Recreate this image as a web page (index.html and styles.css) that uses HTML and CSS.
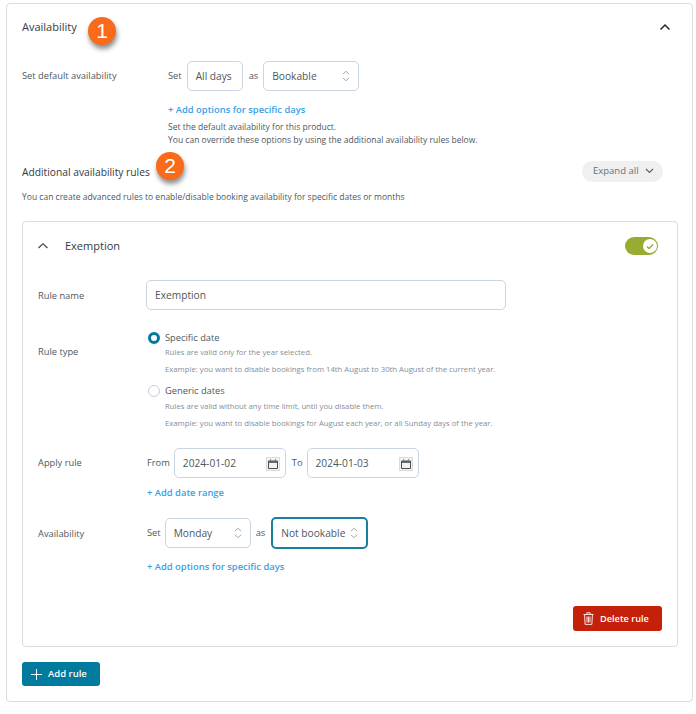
FILE: index.html
```html
<!DOCTYPE html>
<html lang="en">
<head>
<meta charset="utf-8">
<title>Availability</title>
<link rel="stylesheet" href="styles.css">
</head>
<body>
<main class="panel">
  <span class="badge badge-one">1</span>
  <span class="badge badge-two">2</span>
  <header class="panel-head">
    <h2 class="title">Availability</h2>
    <svg class="chev-top" width="12" height="8" viewBox="0 0 12 8"><path d="M1.5 6.5 6 2l4.5 4.5" fill="none" stroke="#1f2a33" stroke-width="1.5"/></svg>
  </header>
  <section class="default-row">
    <div class="label default-label">Set default availability</div>
    <div class="default-body">
      <div class="inline">
        <span class="word">Set</span>
        <div class="field w-alldays">All days</div>
        <span class="word">as</span>
        <div class="field select w-bookable">Bookable
          <svg class="updown" width="8" height="12" viewBox="0 0 8 12"><path d="M1 4.2 4 1.2l3 3M1 7.8l3 3 3-3" fill="none" stroke="#9aa3ad" stroke-width="1"/></svg>
        </div>
      </div>
      <a class="link default-link">+ Add options for specific days</a>
      <p class="help">Set the default availability for this product.<br>You can override these options by using the additional availability rules below.</p>
    </div>
  </section>
  <section class="rules-head">
    <h3 class="subtitle">Additional availability rules</h3>
    <button class="pill">Expand all
      <svg width="9" height="6" viewBox="0 0 9 6"><path d="M1 1l3.5 3.5L8 1" fill="none" stroke="#55606a" stroke-width="1.1"/></svg>
    </button>
  </section>
  <p class="rules-desc">You can create advanced rules to enable/disable booking availability for specific dates or months</p>

  <article class="rule">
    <header class="rule-head">
      <svg class="chev-rule" width="12" height="8" viewBox="0 0 12 8"><path d="M1.5 6 6 1.7 10.5 6" fill="none" stroke="#333c44" stroke-width="1.1"/></svg>
      <span class="rule-title">Exemption</span>
      <span class="toggle"><span class="knob"><svg width="8" height="7" viewBox="0 0 8 7"><path d="M1 3.6 3 5.6 7 1.4" fill="none" stroke="#98ab32" stroke-width="1.4"/></svg></span></span>
    </header>
    <div class="row row-name">
      <div class="label rule-label">Rule name</div>
      <div class="field w-name">Exemption</div>
    </div>
    <div class="row row-type">
      <div class="label rule-label">Rule type</div>
      <div class="options">
        <div class="option-line"><span class="radio on"></span><span class="option-name">Specific date</span></div>
        <div class="option-note lead">Rules are valid only for the year selected.</div>
        <div class="option-note">Example: you want to disable bookings from 14th August to 30th August of the current year.</div>
        <div class="option-line second"><span class="radio"></span><span class="option-name">Generic dates</span></div>
        <div class="option-note lead-second">Rules are valid without any time limit, until you disable them.</div>
        <div class="option-note">Example: you want to disable bookings for August each year, or all Sunday days of the year.</div>
      </div>
    </div>
    <div class="row row-apply">
      <div class="label rule-label">Apply rule</div>
      <div class="apply-body">
        <div class="inline">
          <span class="word from">From</span>
          <div class="field date">2024-01-02
            <svg class="cal" width="14" height="14" viewBox="0 0 14 14"><rect x="0.5" y="0.5" width="13" height="13" fill="#f1f1ee" stroke="#dcdcd8"/><path d="M2.5 4h9v7.5h-9z" fill="none" stroke="#4a4f55"/><path d="M2.5 5h9" stroke="#4a4f55" stroke-width="1.6"/><path d="M4.5 2v2M9.5 2v2" stroke="#8b8f94"/></svg>
          </div>
          <span class="word to">To</span>
          <div class="field date">2024-01-03
            <svg class="cal" width="14" height="14" viewBox="0 0 14 14"><rect x="0.5" y="0.5" width="13" height="13" fill="#f1f1ee" stroke="#dcdcd8"/><path d="M2.5 4h9v7.5h-9z" fill="none" stroke="#4a4f55"/><path d="M2.5 5h9" stroke="#4a4f55" stroke-width="1.6"/><path d="M4.5 2v2M9.5 2v2" stroke="#8b8f94"/></svg>
          </div>
        </div>
        <a class="link range-link">+ Add date range</a>
      </div>
    </div>
    <div class="row row-avail">
      <div class="label rule-label">Availability</div>
      <div class="avail-body">
        <div class="inline">
          <span class="word set">Set</span>
          <div class="field select w-monday">Monday
            <svg class="updown" width="8" height="12" viewBox="0 0 8 12"><path d="M1 4.2 4 1.2l3 3M1 7.8l3 3 3-3" fill="none" stroke="#9aa3ad" stroke-width="1"/></svg>
          </div>
          <span class="word as">as</span>
          <div class="field select focus">Not bookable
            <svg class="updown" width="8" height="12" viewBox="0 0 8 12"><path d="M1 4.2 4 1.2l3 3M1 7.8l3 3 3-3" fill="none" stroke="#9aa3ad" stroke-width="1"/></svg>
          </div>
        </div>
        <a class="link avail-link">+ Add options for specific days</a>
      </div>
    </div>
    <footer class="rule-foot">
      <button class="btn danger">
        <svg width="11" height="13" viewBox="0 0 11 13"><path d="M0.5 2.5h10M3.8 2.3V.8h3.4v1.5M1.6 2.8l.5 9.6h6.8l.5-9.6M4 4.5v6M5.5 4.5v6M7 4.5v6" fill="none" stroke="#fbe3e0" stroke-width="1"/></svg>
        Delete rule
      </button>
    </footer>
  </article>
  <button class="btn primary">
    <svg width="11" height="11" viewBox="0 0 11 11"><path d="M5.5 0v11M0 5.5h11" stroke="#fff" stroke-width="1"/></svg>
    Add rule
  </button>
</main>
</body>
</html>
```

FILE: styles.css
```css
* { box-sizing: border-box; }
html, body { margin: 0; padding: 0; background: #fff; }
body {
  width: 696px;
  height: 714px;
  padding: 3px 3px 0 6px;
  font-family: "Open Sans", "Noto Sans", sans-serif;
  font-size: 10px;
  line-height: 14px;
  color: #4d5760;
  overflow: hidden;
}
.panel {
  position: relative;
  width: 687px;
  height: 699px;
  padding: 0 15px;
  border: 1px solid #dcdcdc;
  border-radius: 4px;
}
.panel-head {
  display: flex;
  align-items: center;
  justify-content: space-between;
  height: 46px;
  padding-right: 6px;
}
.title { margin: 0; font-size: 11px; font-weight: 500; color: #2f3b45; }
.badge {
  position: absolute;
  width: 28px;
  height: 28px;
  border-radius: 50%;
  background: #f96a1a;
  color: #fff;
  font-family: "Liberation Sans", Arial, sans-serif;
  font-size: 21px;
  line-height: 28px;
  text-align: center;
  box-shadow: 1px 4px 5px rgba(0, 0, 0, 0.45);
}
.badge-one { left: 81px; top: 13px; }
.badge-two { left: 149px; top: 148px; }
.default-row { display: flex; height: 96px; margin-top: 11px; }
.label { font-size: 9.3px; color: #4d5760; }
.default-label { width: 146px; padding-top: 8px; }
.inline { display: flex; align-items: center; }
.word { font-size: 9.3px; }
.field {
  position: relative;
  display: flex;
  align-items: center;
  height: 30px;
  padding: 0 8px;
  border: 1px solid #cbd5e1;
  border-radius: 5px;
  background: #fff;
  font-size: 10.2px;
  color: #4d5760;
}
.w-alldays { width: 56px; margin: 0 6px 0 5px; }
.w-bookable { width: 96px; margin-left: 5px; }
.updown { position: absolute; right: 8px; top: 50%; margin-top: -6px; }
.link { display: block; font-size: 9.4px; font-weight: 600; color: #3a9fe6; line-height: 14px; }
.default-link { margin-top: 12px; }
.help { margin: 3px 0 0; font-size: 8.53px; line-height: 13px; color: #4d5760; }
.rules-head {
  display: flex;
  align-items: center;
  justify-content: space-between;
  height: 22px;
  margin-top: 3px;
  padding-right: 14px;
}
.subtitle { margin: 0; padding-top: 2px; font-size: 10.25px; font-weight: 500; color: #2f3b45; }
.pill {
  display: flex;
  align-items: center;
  gap: 6px;
  height: 21px;
  width: 81px;
  padding: 0 0 0 11px;
  border: 0;
  border-radius: 11px;
  background: #f0f0f0;
  font: 500 9.5px/14px "Open Sans", "Noto Sans", sans-serif;
  color: #66707a;
}
.rules-desc { margin: 8px 0 17px; font-size: 8.53px; line-height: 14px; color: #4d5760; }
.rule {
  width: 656px;
  height: 426px;
  padding: 0 15px;
  border: 1px solid #dcdcdc;
  border-radius: 4px;
}
.rule-head { display: flex; align-items: center; height: 48px; }
.chev-rule { flex: none; margin: 0 16px 0 -1px; }
.rule-title { font-size: 11px; color: #2f3b45; }
.toggle {
  position: relative;
  display: block;
  width: 33px;
  height: 18px;
  margin-left: auto;
  margin-right: 4px;
  border-radius: 9px;
  background: #98ab32;
}
.knob {
  position: absolute;
  right: 1px;
  top: 2px;
  display: flex;
  align-items: center;
  justify-content: center;
  width: 14px;
  height: 14px;
  border-radius: 50%;
  background: #fff;
}
.row { display: flex; }
.rule-label { width: 108px; flex: none; }
.row-name { align-items: center; height: 30px; margin-top: 10px; }
.row-name .rule-label { padding-top: 1px; }
.w-name { width: 360px; }
.row-type { margin-top: 21px; height: 100px; }
.row-type .rule-label { padding-top: 14px; }
.options { margin-left: 2px; }
.option-line { display: flex; align-items: center; height: 14px; }
.option-line.second { margin-top: 9px; }
.radio {
  width: 12px;
  height: 12px;
  margin-right: 5px;
  border: 1px solid #c5ced8;
  border-radius: 50%;
  background: #fff;
}
.radio.on { border: 3.5px solid #007b9e; }
.option-name { font-size: 9.3px; color: #4d5760; }
.option-note { font-size: 7.72px; line-height: 12px; margin-top: 5px; margin-left: 17px; color: #868e96; }
.option-note.lead { margin-top: 1px; }
.option-note.lead-second { margin-top: 2px; }
.row-apply { margin-top: 17px; height: 56px; }
.row-apply .rule-label { padding-top: 8px; }
.apply-body, .avail-body { margin-left: 1px; }
.date { width: 112px; }
.cal { position: absolute; right: 5px; top: 8px; }
.from { margin-right: 4px; }
.to { margin: 0 4px 0 6px; }
.range-link { margin-top: 8px; }
.row-avail { margin-top: 13px; height: 67px; }
.row-avail .rule-label { padding-top: 10px; }
.set { margin-right: 4px; }
.as { margin: 0 6px 0 5px; }
.w-monday { width: 86px; }
.focus { width: 97px; height: 32px; border: 2px solid #1a7f9c; }
.avail-link { margin-top: 11px; }
.rule-foot { display: flex; justify-content: flex-end; margin-top: 22px; }
.btn {
  display: flex;
  align-items: center;
  border: 0;
  border-radius: 3px;
  color: #fff;
  font: 600 9.5px/14px "Open Sans", "Noto Sans", sans-serif;
}
.danger { width: 89px; height: 25px; padding: 0 0 0 10px; gap: 6px; background: #c4200a; font-size: 9.2px; }
.primary { width: 78px; height: 24px; margin-top: 15px; padding: 0 0 0 9px; gap: 6px; background: #007b9e; }
```
